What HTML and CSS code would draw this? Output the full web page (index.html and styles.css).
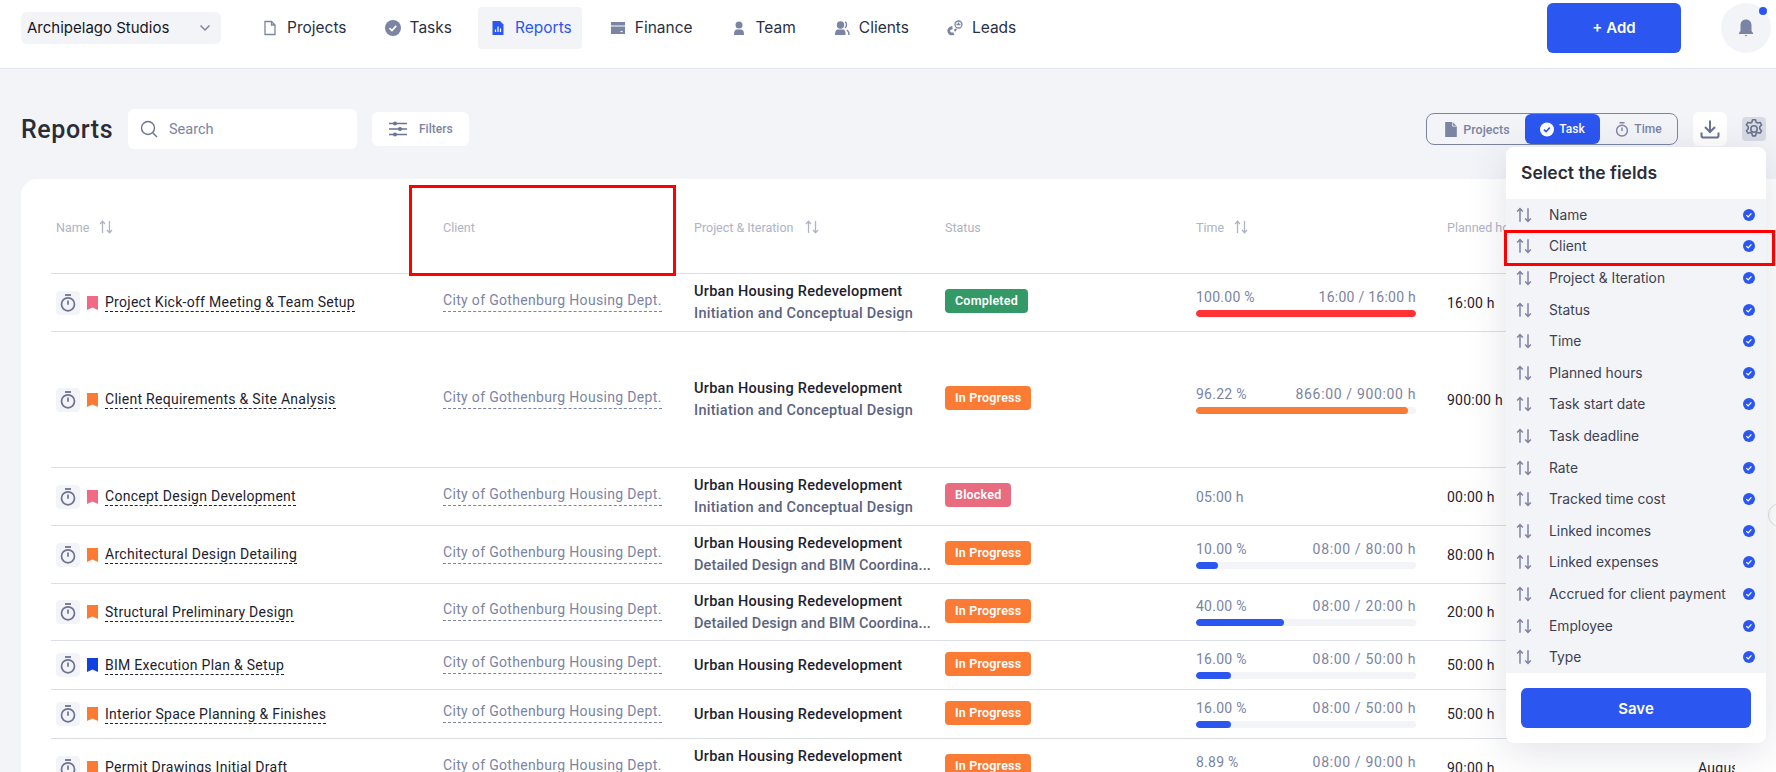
FILE: index.html
```html
<!DOCTYPE html>
<html lang="en">
<head>
<meta charset="utf-8">
<title>Reports</title>
<link rel="stylesheet" href="styles.css">
</head>
<body>
<svg class="defs" width="0" height="0" aria-hidden="true">
  <symbol id="sort" viewBox="0 0 14 14"><path d="M3.500 13V1.500M1 4l2.500-2.700L6 4M10.500 1v11.500M8 10l2.500 2.700L13 10" fill="none" stroke="currentColor" stroke-width="1.300"/></symbol>
  <symbol id="timer" viewBox="0 0 16 18"><path d="M5 1h6" stroke="currentColor" stroke-width="1.800" fill="none"/><circle cx="8" cy="10.300" r="6.500" fill="none" stroke="currentColor" stroke-width="1.700"/><path d="M8 6.500v4.300" stroke="currentColor" stroke-width="1.700" fill="none"/></symbol>
  <symbol id="mark" viewBox="0 0 11 14"><path d="M0 0h11v14L5.500 11.500 0 14z" fill="currentColor"/></symbol>
  <symbol id="check" viewBox="0 0 16 16"><circle cx="8" cy="8" r="8" fill="currentColor"/><path d="M4.500 8.200l2.400 2.300 4.300-4.600" fill="none" stroke="#fff" stroke-width="1.700"/></symbol>
</svg>

<header class="topbar">
  <div class="org"><span>Archipelago Studios</span>
    <svg class="org-caret" viewBox="0 0 12 8"><path d="M1.500 1.500L6 6l4.500-4.500" fill="none" stroke="currentColor" stroke-width="1.500"/></svg>
  </div>
  <nav class="nav">
    <a class="nav-item"><svg class="nav-ico" viewBox="0 0 16 16"><path d="M3 1.500h6.500L13 5v9.500H3z M9.500 1.500V5H13" fill="none" stroke="currentColor" stroke-width="1.300"/></svg>Projects</a>
    <a class="nav-item"><svg class="nav-ico" viewBox="0 0 16 16"><use href="#check"/></svg>Tasks</a>
    <a class="nav-item nav-active"><svg class="nav-ico" viewBox="0 0 16 16"><path d="M2.500 1h7.500l3.500 3.500V15h-11z" fill="currentColor"/><path d="M5.500 12V9.500M8 12V6.500M10.500 12V8.500" stroke="#fff" stroke-width="1.200"/></svg>Reports</a>
    <a class="nav-item"><svg class="nav-ico" viewBox="0 0 16 16"><path d="M1 2h14v3.500H1z M1 6.500h14V14H1z" fill="currentColor"/><path d="M10.500 11.500h2" stroke="#fff" stroke-width="1.200"/></svg>Finance</a>
    <a class="nav-item"><svg class="nav-ico" viewBox="0 0 16 16"><circle cx="8" cy="5" r="3.500" fill="currentColor"/><path d="M3 15c0-4 1-5.500 3.500-5.500h3c2.500 0 3.500 1.500 3.500 5.500z" fill="currentColor"/></svg>Team</a>
    <a class="nav-item"><svg class="nav-ico" viewBox="0 0 16 16"><circle cx="6.500" cy="5" r="3.700" fill="currentColor"/><path d="M1 15c0-4 1-5.500 3.500-5.500h4c2.500 0 3 1.500 3 5.500z" fill="currentColor"/><path d="M11 1.800c2 1 2 4.700 0 6.200M13 10c1.500 1 2 3 2 5" fill="none" stroke="currentColor" stroke-width="1.400"/></svg>Clients</a>
    <a class="nav-item"><svg class="nav-ico" viewBox="0 0 16 16"><circle cx="11.500" cy="4.500" r="3.500" fill="none" stroke="currentColor" stroke-width="1.300"/><path d="M9.500 4.500h4M11.500 2.500v2" stroke="currentColor" stroke-width="1.300"/><path d="M5.500 7.500C2.500 8 1.300 10 2 12c.7 1.800 3 2.500 4.800 1.500" fill="none" stroke="currentColor" stroke-width="2.800"/><path d="M7.500 11c.8-.6 1.300-1.300 1.500-2.200" fill="none" stroke="currentColor" stroke-width="2"/></svg>Leads</a>
  </nav>
  <button class="add-btn">+ Add</button>
  <div class="bell"><svg class="bell-ico" viewBox="0 0 16 18"><path d="M8 0.500c-3.500 0-5.500 2.500-5.500 6v5.500L1 14v1h14v-1l-1.500-2V6.500c0-3.500-2-6-5.500-6z" fill="currentColor"/><path d="M6.500 16h3L8 17.500z" fill="currentColor"/></svg><span class="bell-dot"></span></div>
</header>

<main class="page">
  <div class="toolbar">
    <h1 class="title">Reports</h1>
    <label class="search"><svg class="search-ico" viewBox="0 0 18 18"><circle cx="8" cy="8" r="6.500" fill="none" stroke="currentColor" stroke-width="1.400"/><path d="M12.800 12.800L17 17" stroke="currentColor" stroke-width="1.400"/></svg><span>Search</span></label>
    <button class="filters"><svg class="filters-ico" viewBox="0 0 18 16"><path d="M0 2.500h18M0 8h18M0 13.500h18" stroke="currentColor" stroke-width="1.400"/><circle cx="6" cy="2.500" r="2" fill="currentColor"/><circle cx="11" cy="8" r="2" fill="currentColor"/><circle cx="6" cy="13.500" r="2" fill="currentColor"/></svg>Filters</button>
    <div class="switch">
      <span class="switch-item switch-projects"><svg class="switch-ico" viewBox="0 0 16 18"><path d="M1 0h9l5 5v13H1z" fill="currentColor"/><path d="M10 0v5h5" fill="none" stroke="#f3f4f8" stroke-width="1"/></svg>Projects</span>
      <span class="switch-item switch-active"><svg class="switch-ico" viewBox="0 0 16 16"><circle cx="8" cy="8" r="8" fill="#fff"/><path d="M4.500 8.200l2.400 2.300 4.300-4.600" fill="none" stroke="#2b56f0" stroke-width="1.800"/></svg>Task</span>
      <span class="switch-item"><svg class="switch-ico" viewBox="0 0 16 18"><use href="#timer"/></svg>Time</span>
    </div>
    <button class="download"><svg class="download-ico" viewBox="0 0 20 20"><path d="M10 1.500v11.500M5 8l5 5 5-5M1.500 13.500v3.200c0 1 .8 1.800 1.800 1.800h13.400c1 0 1.800-.8 1.800-1.800v-3.200" fill="none" stroke="currentColor" stroke-width="2"/></svg></button>
    <button class="gear"><svg class="gear-ico" viewBox="0 0 18 18"><path d="M7.800 1.400h2.400l.6 2.100 1.100.6 2.100-.5 1.200 2-1.500 1.600v1.600l1.500 1.600-1.200 2-2.100-.5-1.100.6-.6 2.100H7.800l-.6-2.100-1.100-.6-2.100.5-1.200-2 1.500-1.600V7.200L2.800 5.600l1.200-2 2.100.5 1.100-.6z" fill="none" stroke="currentColor" stroke-width="1.300" stroke-linejoin="round"/><circle cx="9" cy="9" r="2.600" fill="none" stroke="currentColor" stroke-width="1.300"/></svg></button>
  </div>

  <section class="card">
    <div class="scroller">
      <div class="row row-head">
        <div class="cell cell-name head">Name<svg class="sort-ico"><use href="#sort"/></svg></div>
        <div class="cell head">Client</div>
        <div class="cell head">Project &amp; Iteration<svg class="sort-ico sort-far"><use href="#sort"/></svg></div>
        <div class="cell head">Status</div>
        <div class="cell head">Time<svg class="sort-ico"><use href="#sort"/></svg></div>
        <div class="cell head">Planned hours</div>
        <div class="cell head">Task start</div>
      </div>

      <div class="row row-58">
        <div class="cell cell-name"><span class="tile"><svg class="timer"><use href="#timer"/></svg></span><svg class="mark mark-pink"><use href="#mark"/></svg><span class="task">Project Kick-off Meeting &amp; Team Setup</span></div>
        <div class="cell"><span class="client">City of Gothenburg Housing Dept.</span></div>
        <div class="cell cell-project"><strong>Urban Housing Redevelopment</strong><span>Initiation and Conceptual Design</span></div>
        <div class="cell"><span class="badge badge-green">Completed</span></div>
        <div class="cell cell-time"><div class="time-line"><span>100.00 %</span><span class="time-ones">16:00 / 16:00 h</span></div><div class="bar"><div class="fill fill-red" style="width:100%"></div></div></div>
        <div class="cell planned">16:00 h</div>
        <div class="cell planned"></div>
      </div>

      <div class="row row-136">
        <div class="cell cell-name"><span class="tile"><svg class="timer"><use href="#timer"/></svg></span><svg class="mark mark-orange"><use href="#mark"/></svg><span class="task">Client Requirements &amp; Site Analysis</span></div>
        <div class="cell"><span class="client">City of Gothenburg Housing Dept.</span></div>
        <div class="cell cell-project"><strong>Urban Housing Redevelopment</strong><span>Initiation and Conceptual Design</span></div>
        <div class="cell"><span class="badge badge-orange">In Progress</span></div>
        <div class="cell cell-time"><div class="time-line"><span>96.22 %</span><span class="time-range">866:00 / 900:00 h</span></div><div class="bar"><div class="fill fill-orange" style="width:96.22%"></div></div></div>
        <div class="cell planned">900:00 h</div>
        <div class="cell planned"></div>
      </div>

      <div class="row row-58">
        <div class="cell cell-name"><span class="tile"><svg class="timer"><use href="#timer"/></svg></span><svg class="mark mark-pink"><use href="#mark"/></svg><span class="task">Concept Design Development</span></div>
        <div class="cell"><span class="client">City of Gothenburg Housing Dept.</span></div>
        <div class="cell cell-project"><strong>Urban Housing Redevelopment</strong><span>Initiation and Conceptual Design</span></div>
        <div class="cell"><span class="badge badge-pink">Blocked</span></div>
        <div class="cell time-plain">05:00 h</div>
        <div class="cell planned">00:00 h</div>
        <div class="cell planned"></div>
      </div>

      <div class="row row-58">
        <div class="cell cell-name"><span class="tile"><svg class="timer"><use href="#timer"/></svg></span><svg class="mark mark-orange"><use href="#mark"/></svg><span class="task">Architectural Design Detailing</span></div>
        <div class="cell"><span class="client">City of Gothenburg Housing Dept.</span></div>
        <div class="cell cell-project"><strong>Urban Housing Redevelopment</strong><span class="sub-cut">Detailed Design and BIM Coordina...</span></div>
        <div class="cell"><span class="badge badge-orange">In Progress</span></div>
        <div class="cell cell-time"><div class="time-line"><span>10.00 %</span><span class="time-range">08:00 / 80:00 h</span></div><div class="bar"><div class="fill fill-blue" style="width:10%"></div></div></div>
        <div class="cell planned">80:00 h</div>
        <div class="cell planned"></div>
      </div>

      <div class="row row-57">
        <div class="cell cell-name"><span class="tile"><svg class="timer"><use href="#timer"/></svg></span><svg class="mark mark-orange"><use href="#mark"/></svg><span class="task">Structural Preliminary Design</span></div>
        <div class="cell"><span class="client">City of Gothenburg Housing Dept.</span></div>
        <div class="cell cell-project"><strong>Urban Housing Redevelopment</strong><span class="sub-cut">Detailed Design and BIM Coordina...</span></div>
        <div class="cell"><span class="badge badge-orange">In Progress</span></div>
        <div class="cell cell-time"><div class="time-line"><span>40.00 %</span><span class="time-range">08:00 / 20:00 h</span></div><div class="bar"><div class="fill fill-blue" style="width:40%"></div></div></div>
        <div class="cell planned">20:00 h</div>
        <div class="cell planned"></div>
      </div>

      <div class="row row-49">
        <div class="cell cell-name"><span class="tile"><svg class="timer"><use href="#timer"/></svg></span><svg class="mark mark-blue"><use href="#mark"/></svg><span class="task">BIM Execution Plan &amp; Setup</span></div>
        <div class="cell"><span class="client">City of Gothenburg Housing Dept.</span></div>
        <div class="cell cell-project"><strong>Urban Housing Redevelopment</strong></div>
        <div class="cell"><span class="badge badge-orange">In Progress</span></div>
        <div class="cell cell-time"><div class="time-line"><span>16.00 %</span><span class="time-range">08:00 / 50:00 h</span></div><div class="bar"><div class="fill fill-blue" style="width:16%"></div></div></div>
        <div class="cell planned">50:00 h</div>
        <div class="cell planned"></div>
      </div>

      <div class="row row-49">
        <div class="cell cell-name"><span class="tile"><svg class="timer"><use href="#timer"/></svg></span><svg class="mark mark-orange"><use href="#mark"/></svg><span class="task">Interior Space Planning &amp; Finishes</span></div>
        <div class="cell"><span class="client">City of Gothenburg Housing Dept.</span></div>
        <div class="cell cell-project"><strong>Urban Housing Redevelopment</strong></div>
        <div class="cell"><span class="badge badge-orange">In Progress</span></div>
        <div class="cell cell-time"><div class="time-line"><span>16.00 %</span><span class="time-range">08:00 / 50:00 h</span></div><div class="bar"><div class="fill fill-blue" style="width:16%"></div></div></div>
        <div class="cell planned">50:00 h</div>
        <div class="cell planned"></div>
      </div>

      <div class="row row-58">
        <div class="cell cell-name"><span class="tile"><svg class="timer"><use href="#timer"/></svg></span><svg class="mark mark-orange"><use href="#mark"/></svg><span class="task">Permit Drawings Initial Draft</span></div>
        <div class="cell"><span class="client">City of Gothenburg Housing Dept.</span></div>
        <div class="cell cell-project"><strong>Urban Housing Redevelopment</strong><span class="sub-cut">Detailed Design and BIM Coordina...</span></div>
        <div class="cell"><span class="badge badge-orange">In Progress</span></div>
        <div class="cell cell-time"><div class="time-line"><span>8.89 %</span><span class="time-range">08:00 / 90:00 h</span></div><div class="bar"><div class="fill fill-blue" style="width:8.89%"></div></div></div>
        <div class="cell planned">90:00 h</div>
        <div class="cell planned">August 2025</div>
      </div>
    </div>
  </section>
</main>

<span class="scroll-knob"></span>
<span class="hl hl-column"></span>

<aside class="fields">
  <h2 class="fields-title">Select the fields</h2>
  <ul class="fields-list">
    <li class="field"><svg class="field-sort"><use href="#sort"/></svg><span>Name</span><svg class="field-check"><use href="#check"/></svg></li>
    <li class="field"><svg class="field-sort"><use href="#sort"/></svg><span>Client</span><svg class="field-check"><use href="#check"/></svg></li>
    <li class="field"><svg class="field-sort"><use href="#sort"/></svg><span>Project &amp; Iteration</span><svg class="field-check"><use href="#check"/></svg></li>
    <li class="field"><svg class="field-sort"><use href="#sort"/></svg><span>Status</span><svg class="field-check"><use href="#check"/></svg></li>
    <li class="field"><svg class="field-sort"><use href="#sort"/></svg><span>Time</span><svg class="field-check"><use href="#check"/></svg></li>
    <li class="field"><svg class="field-sort"><use href="#sort"/></svg><span>Planned hours</span><svg class="field-check"><use href="#check"/></svg></li>
    <li class="field"><svg class="field-sort"><use href="#sort"/></svg><span>Task start date</span><svg class="field-check"><use href="#check"/></svg></li>
    <li class="field"><svg class="field-sort"><use href="#sort"/></svg><span>Task deadline</span><svg class="field-check"><use href="#check"/></svg></li>
    <li class="field"><svg class="field-sort"><use href="#sort"/></svg><span>Rate</span><svg class="field-check"><use href="#check"/></svg></li>
    <li class="field"><svg class="field-sort"><use href="#sort"/></svg><span>Tracked time cost</span><svg class="field-check"><use href="#check"/></svg></li>
    <li class="field"><svg class="field-sort"><use href="#sort"/></svg><span>Linked incomes</span><svg class="field-check"><use href="#check"/></svg></li>
    <li class="field"><svg class="field-sort"><use href="#sort"/></svg><span>Linked expenses</span><svg class="field-check"><use href="#check"/></svg></li>
    <li class="field"><svg class="field-sort"><use href="#sort"/></svg><span>Accrued for client payment</span><svg class="field-check"><use href="#check"/></svg></li>
    <li class="field"><svg class="field-sort"><use href="#sort"/></svg><span>Employee</span><svg class="field-check"><use href="#check"/></svg></li>
    <li class="field"><svg class="field-sort"><use href="#sort"/></svg><span>Type</span><svg class="field-check"><use href="#check"/></svg></li>
  </ul>
  <div class="fields-foot"><button class="save-btn">Save</button></div>
</aside>

<span class="hl hl-field"></span>
</body>
</html>
```

FILE: styles.css
```css
* { box-sizing: border-box; }
html, body { margin: 0; height: 772px; overflow: hidden; }
body { position: relative; background: #f3f4f8; font-family: "Roboto", "Liberation Sans", sans-serif; color: #1c2130; }
.defs { position: absolute; }
button { font: inherit; border: 0; cursor: pointer; }

.topbar { height: 69px; background: #fff; border-bottom: 1px solid #e3e4ec; display: flex; align-items: center; padding: 0 5px 1px 21px; }
.org { width: 200px; height: 32px; margin-top: -12px; background: #f3f4f8; border-radius: 6px; display: flex; align-items: center; justify-content: space-between; padding: 0 10px 0 6px; font: 400 15px "Inter", sans-serif; color: #14171f; }
.org-caret { width: 12px; height: 8px; color: #7b84a3; }
.nav { display: flex; gap: 16px; margin: -12px 0 0 29px; flex: 1; }
.nav-item { height: 42px; display: flex; align-items: center; gap: 9px; padding: 0 10px 0 12px; border-radius: 4px; font: 400 15.500px "Inter", sans-serif; color: #2a3044; }
.nav-ico { width: 16px; height: 16px; color: #7b84a3; }
.nav-active { background: #f3f4f8; color: #2b56f0; }
.nav-active .nav-ico { color: #2b56f0; }
.add-btn { width: 134px; height: 50px; margin: -12px 40px 0 0; background: #2b56f0; border-radius: 6px; color: #fff; font: 600 15px "Inter", sans-serif; }
.bell { position: relative; width: 50px; height: 50px; margin-top: -12px; border-radius: 50%; background: #f3f4f8; display: flex; align-items: center; justify-content: center; }
.bell-ico { width: 16px; height: 18px; color: #7b84a3; }
.bell-dot { position: absolute; top: 4px; right: 4px; width: 8px; height: 8px; border-radius: 50%; background: #2b56f0; }

.toolbar { height: 40px; margin-top: 40px; padding: 0 10px 0 21px; display: flex; align-items: center; }
.title { margin: 0; width: 107px; font: 500 25px "Roboto", sans-serif; color: #2a2d38; letter-spacing: .6px; }
.search { width: 229px; height: 40px; background: #fff; border-radius: 6px; display: flex; align-items: center; gap: 11px; padding: 0 12px; font-size: 14.500px; color: #7b84a3; }
.search-ico { width: 18px; height: 18px; color: #6b7390; }
.filters { width: 97px; height: 34px; margin-left: 15px; background: #fff; border-radius: 6px; display: flex; align-items: center; gap: 12px; padding: 0 0 0 17px; font-size: 12px; font-weight: 500; color: #7b84a3; }
.filters-ico { width: 18px; height: 16px; color: #6b7390; }
.switch { margin-left: auto; width: 252px; height: 32px; border: 1px solid #7b84a3; border-radius: 8px; display: flex; align-items: center; font-size: 12px; font-weight: 500; color: #7b84a3; }
.switch-item { display: flex; align-items: center; justify-content: center; gap: 5px; height: 30px; flex: 1; }
.switch-projects { flex: 0 0 98px; font-size: 12.500px; padding-left: 2px; }
.switch-active { flex: 0 0 75px; background: #2b56f0; color: #fff; border-radius: 6px; }
.switch-ico { width: 14px; height: 15px; }
.download { width: 34px; height: 34px; margin-left: 15px; padding: 7px; background: #fff; border-radius: 6px; color: #6b7390; display: flex; }
.download-ico { width: 20px; height: 20px; }
.gear { width: 24px; height: 24px; margin-left: 15px; padding: 1px; background: #d8dbe4; border-radius: 4px; color: #6b7390; display: flex; }
.gear-ico { width: 22px; height: 22px; }

.card { margin: 30px 0 0 21px; height: 600px; background: #fff; border-radius: 16px 0 0 0; padding-left: 30px; overflow: hidden; }
.scroller { width: 1684px; overflow: hidden; }
.row { display: grid; grid-template-columns: 392px repeat(6, 251px); border-bottom: 1px solid #dcdee6; }
.row-head { height: 95px; padding-top: 2px; }
.row-58 { height: 58px; }
.row-136 { height: 136px; }
.row-57 { height: 57px; }
.row-49 { height: 49px; }
.cell { display: flex; align-items: center; min-width: 0; padding-right: 15px; font-size: 14px; }
.cell-name { padding-left: 5px; }
.head { font-size: 12.500px; color: #aeb3c5; white-space: nowrap; }
.sort-ico { width: 14px; height: 14px; margin-left: 10px; color: #aeb3c5; }
.sort-far { margin-left: 12px; }
.tile { width: 24px; height: 24px; background: #f3f4f8; border-radius: 4px; display: flex; align-items: center; justify-content: center; flex: none; }
.timer { width: 16px; height: 18px; color: #6b7390; }
.mark { width: 11px; height: 14px; margin: 0 7px; flex: none; }
.mark-pink { color: #ef6a82; }
.mark-orange { color: #fb7a34; }
.mark-blue { color: #1140e0; }
.task { line-height: 17px; padding-top: 1px; border-bottom: 1px dashed #1c2130; letter-spacing: .28px; color: #1c2130; }
.client { line-height: 17px; padding-bottom: 2px; margin-bottom: 2px; border-bottom: 1px dashed #7b84a3; color: #7b84a3; letter-spacing: .33px; white-space: nowrap; }
.cell-project { flex-direction: column; align-items: flex-start; justify-content: center; gap: 5px; line-height: 17px; font-size: 14.500px; }
.cell-project strong { font-weight: 500; color: #1c2130; letter-spacing: .28px; white-space: nowrap; }
.cell-project span { font-weight: 500; color: #5b6480; letter-spacing: .28px; white-space: nowrap; }
.cell-project .sub-cut { letter-spacing: .11px; }
.badge { height: 24px; padding: 0 10px; border-radius: 4px; color: #fff; font-size: 12.500px; font-weight: 600; line-height: 24px; margin-bottom: 3px; letter-spacing: .2px; }
.badge-green { background: #339966; }
.badge-orange { background: #fb7a34; }
.badge-pink { background: #e96b80; }
.cell-time { flex-direction: column; align-items: stretch; justify-content: center; gap: 4px; padding-right: 31px; color: #7b84a3; }
.time-line { display: flex; justify-content: space-between; line-height: 17px; letter-spacing: .25px; }
.time-range { letter-spacing: .65px; }
.time-ones { letter-spacing: .25px; }
.time-plain { color: #7b84a3; letter-spacing: .25px; }
.planned { color: #1c2130; letter-spacing: .25px; white-space: nowrap; }
.bar { height: 7px; background: #f3f4f8; border-radius: 4px; overflow: hidden; }
.fill { height: 100%; border-radius: 4px; }
.fill-red { background: #ff3236; }
.fill-orange { background: #fb7a34; }
.fill-blue { background: #2b56f0; }

.scroll-knob { position: absolute; left: 1768px; top: 503px; width: 24px; height: 24px; border-radius: 50%; background: #fff; border: 1px solid #dcdee6; }
.hl { position: absolute; border: 3px solid #f00; pointer-events: none; }
.hl-column { left: 409px; top: 185px; width: 267px; height: 91px; }
.hl-field { left: 1504px; top: 230px; width: 271px; height: 36px; }

.fields { position: absolute; left: 1506px; top: 147px; width: 260px; height: 596px; background: #fff; border-radius: 8px; box-shadow: 0 8px 40px rgba(40, 48, 80, .14); display: flex; flex-direction: column; overflow: hidden; }
.fields-title { margin: 0; height: 50px; padding-left: 15px; display: flex; align-items: center; font: 600 17.500px "Inter", sans-serif; color: #2a2d38; }
.fields-list { list-style: none; margin: 2px 0 0; padding: 0; height: 474px; background: #f3f4f8; display: grid; grid-auto-rows: 1fr; }
.field { display: flex; align-items: center; padding: 0 11px 0 10px; font: 400 13.800px "Inter", sans-serif; color: #3d4152; }
.field span { flex: 1; margin-left: 17px; }
.field-sort { width: 16px; height: 16px; color: #7b84a3; }
.field-check { width: 12px; height: 12px; color: #2b56f0; }
.fields-foot { flex: 1; display: flex; align-items: center; justify-content: center; }
.save-btn { width: 230px; height: 40px; background: #2b56f0; border-radius: 6px; color: #fff; font: 600 15px "Inter", sans-serif; }
```
